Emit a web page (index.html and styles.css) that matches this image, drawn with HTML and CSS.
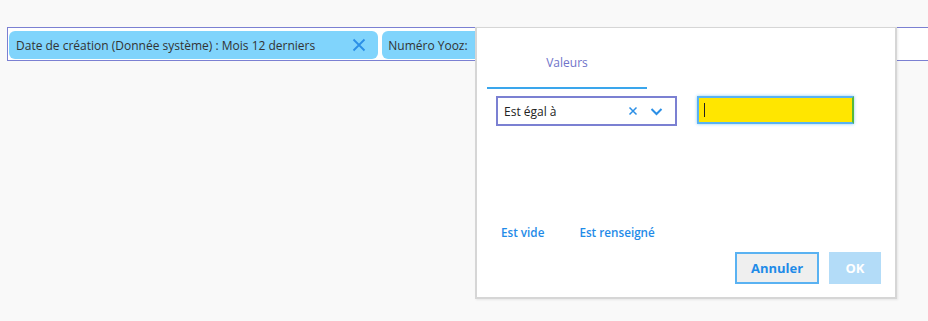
FILE: index.html
```html
<!DOCTYPE html>
<html lang="fr">
<head>
    <meta charset="UTF-8">
    <title>Filtres</title>
    <link rel="stylesheet" href="styles.css">
</head>
<body>
    <div class="filter-bar">
        <div class="chip">
            <span>Date de création (Donnée système) : Mois 12 derniers</span>
            <svg class="chip-close" width="14" height="14" viewBox="0 0 14 14"><path d="M1.5 1.5 L12.5 12.5 M12.5 1.5 L1.5 12.5" stroke="#2b8fe6" stroke-width="1.8" fill="none"/></svg>
        </div>
        <div class="chip chip-open">
            <span>Numéro Yooz:</span>
        </div>
    </div>

    <div class="popup">
        <div class="tabs">
            <div class="tab active">Valeurs</div>
        </div>

        <div class="row">
            <div class="select">
                <span>Est égal à</span>
                <svg class="sel-clear" width="10" height="10" viewBox="0 0 10 10"><path d="M1.5 1.5 L8.5 8.5 M8.5 1.5 L1.5 8.5" stroke="#2b8fe6" stroke-width="1.5" fill="none"/></svg>
                <svg class="sel-arrow" width="13" height="9" viewBox="0 0 13 9"><path d="M1.5 2 L6.5 7 L11.5 2" stroke="#2b8fe6" stroke-width="2" fill="none"/></svg>
            </div>
            <div class="value-input">
                <span class="caret"></span>
            </div>
        </div>

        <div class="links">
            <a href="#">Est vide</a>
            <a href="#">Est renseigné</a>
        </div>

        <div class="actions">
            <button class="btn-cancel">Annuler</button>
            <button class="btn-ok">OK</button>
        </div>
    </div>
</body>
</html>
```

FILE: styles.css
```css
body {
    margin: 0;
    padding: 27px 0 0 7px;
    background-color: #f9f9f9;
    font-family: "Open Sans", "Noto Sans", sans-serif;
    font-size: 12px;
    color: #333;
    position: relative;
    height: 321px;
    box-sizing: border-box;
    overflow: hidden;
}

.filter-bar {
    display: flex;
    gap: 4px;
    height: 34px;
    box-sizing: border-box;
    padding: 3px 1px;
    border: 1px solid #7b80d2;
    border-right: none;
    background-color: #fff;
}

.chip {
    display: flex;
    align-items: center;
    background-color: #80d4fc;
    border-radius: 6px;
    padding: 0 12px 0 7px;
    height: 28px;
    box-sizing: border-box;
    color: #333;
    white-space: nowrap;
}

.chip-close {
    margin-left: 37px;
}

.chip-open {
    padding-left: 6px;
    padding-right: 30px;
}

.popup {
    position: absolute;
    left: 475px;
    top: 27px;
    width: 422px;
    height: 272px;
    box-sizing: border-box;
    background-color: #fff;
    border: 2px solid #d6d6d6;
    border-top-width: 1px;
    box-shadow: 1px 1px 2px rgba(0, 0, 0, 0.08);
    padding: 0 14px 0 10px;
}

.tabs {
    display: flex;
    margin-top: 26px;
}

.tab {
    width: 160px;
    text-align: center;
    color: #6f73c9;
    padding-bottom: 16px;
    border-bottom: 2px solid #3aa6ec;
}

.row {
    display: flex;
    align-items: flex-start;
    gap: 20px;
    margin-top: 7px;
    padding-left: 9px;
}

.select {
    display: flex;
    align-items: center;
    width: 181px;
    height: 30px;
    box-sizing: border-box;
    border: 2px solid #7b80d2;
    padding: 0 12px 0 6px;
    color: #222;
}

.select span {
    flex: 1;
}

.sel-arrow {
    margin-left: 12px;
}

.value-input {
    display: flex;
    align-items: center;
    width: 157px;
    height: 28px;
    box-sizing: border-box;
    border: 2px solid #5ab2f2;
    border-right-color: #56b83c;
    background-color: #ffe600;
    box-shadow: 0 0 3px rgba(58, 166, 236, 0.6);
    padding-left: 5px;
}

.caret {
    width: 1px;
    height: 14px;
    background-color: #222;
}

.links {
    display: flex;
    gap: 35px;
    margin-top: 98px;
    padding-left: 14px;
}

.links a {
    color: #1f8be8;
    font-size: 11.7px;
    font-weight: 600;
    text-decoration: none;
}

.actions {
    display: flex;
    justify-content: flex-end;
    gap: 10px;
    margin-top: 12px;
}

button {
    font-family: inherit;
    font-size: 13px;
    font-weight: 700;
    height: 32px;
    box-sizing: border-box;
    cursor: pointer;
}

.btn-cancel {
    width: 84px;
    background-color: #efefef;
    color: #1f8be8;
    border: 2px solid #5ab2f2;
}

.btn-ok {
    width: 52px;
    background-color: #b3dcf8;
    color: #fff;
    border: none;
}
```
